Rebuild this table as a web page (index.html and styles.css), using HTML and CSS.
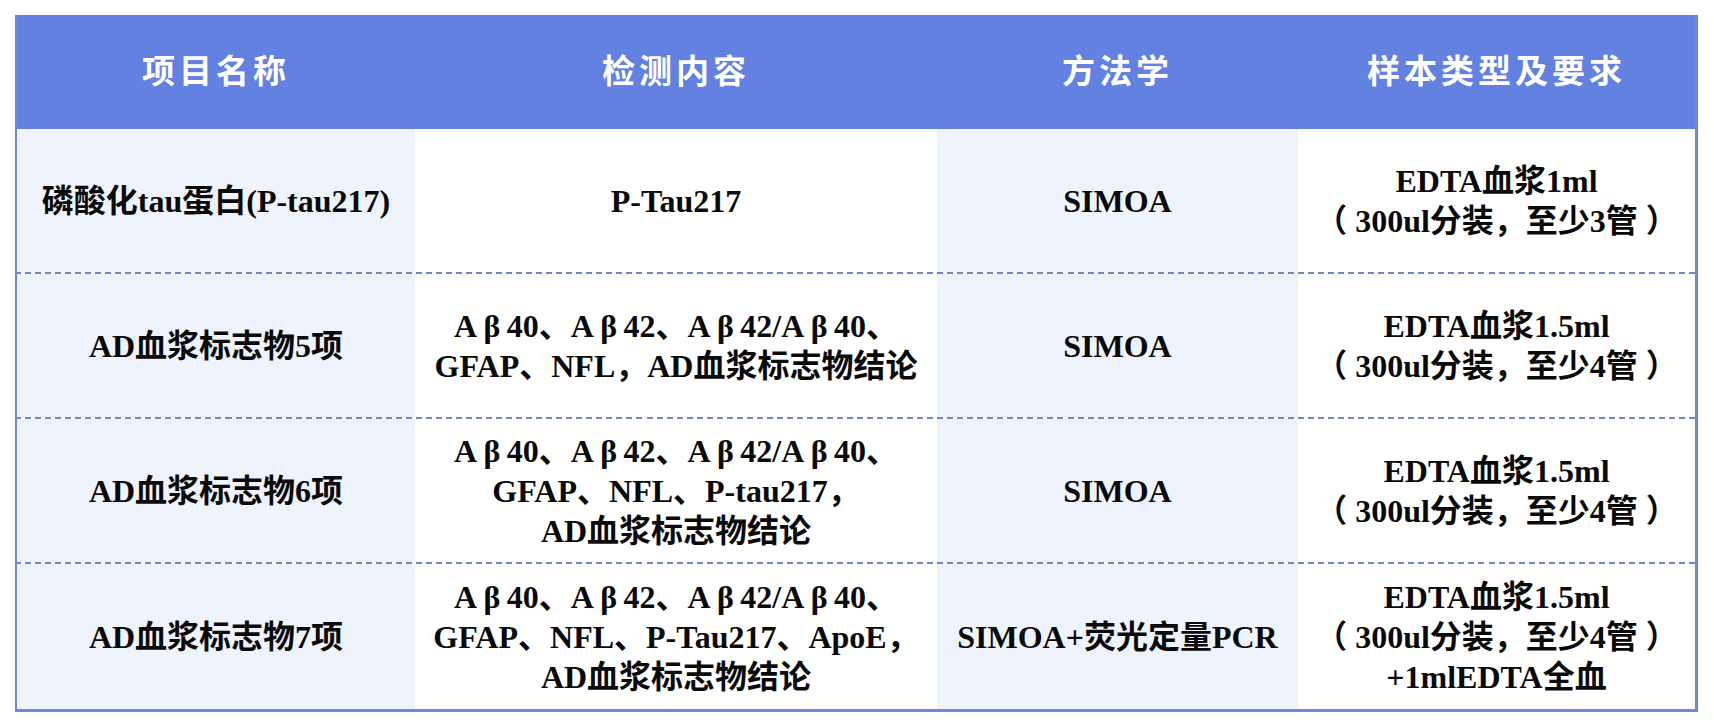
FILE: index.html
```html
<!DOCTYPE html>
<html lang="zh">
<head>
<meta charset="utf-8">
<link rel="stylesheet" href="styles.css">
</head>
<body>
<div class="table">
  <div class="row head">
    <div class="cell"><p>项目名称</p></div>
    <div class="cell"><p>检测内容</p></div>
    <div class="cell"><p>方法学</p></div>
    <div class="cell"><p>样本类型及要求</p></div>
  </div>
  <div class="row">
    <div class="cell alt"><p>磷酸化tau蛋白(P-tau217)</p></div>
    <div class="cell"><p>P-Tau217</p></div>
    <div class="cell alt"><p>SIMOA</p></div>
    <div class="cell"><p>EDTA血浆1ml<br>（ 300ul分装，至少3管 ）</p></div>
  </div>
  <div class="row">
    <div class="cell alt"><p>AD血浆标志物5项</p></div>
    <div class="cell"><p>A<span class="b">β</span>40、A<span class="b">β</span>42、A<span class="b">β</span>42/A<span class="b">β</span>40、<br>GFAP、NFL，AD血浆标志物结论</p></div>
    <div class="cell alt"><p>SIMOA</p></div>
    <div class="cell"><p>EDTA血浆1.5ml<br>（ 300ul分装，至少4管 ）</p></div>
  </div>
  <div class="row">
    <div class="cell alt"><p>AD血浆标志物6项</p></div>
    <div class="cell"><p>A<span class="b">β</span>40、A<span class="b">β</span>42、A<span class="b">β</span>42/A<span class="b">β</span>40、<br>GFAP、NFL、P-tau217，<br>AD血浆标志物结论</p></div>
    <div class="cell alt"><p>SIMOA</p></div>
    <div class="cell"><p>EDTA血浆1.5ml<br>（ 300ul分装，至少4管 ）</p></div>
  </div>
  <div class="row last">
    <div class="cell alt"><p>AD血浆标志物7项</p></div>
    <div class="cell"><p>A<span class="b">β</span>40、A<span class="b">β</span>42、A<span class="b">β</span>42/A<span class="b">β</span>40、<br>GFAP、NFL、P-Tau217、ApoE，<br>AD血浆标志物结论</p></div>
    <div class="cell alt"><p>SIMOA+荧光定量PCR</p></div>
    <div class="cell"><p>EDTA血浆1.5ml<br>（ 300ul分装，至少4管 ）<br>+1mlEDTA全血</p></div>
  </div>
</div>
</body>
</html>
```
FILE: styles.css
```css
html, body {
  margin: 0;
  padding: 0;
  background: #ffffff;
}
body {
  padding: 15px 16px 0 15px;
  font-family: "Liberation Serif", "Noto Sans CJK SC", serif;
  color: #0a0a0a;
}
.table {
  width: 1683px;
  border-left: 2px solid #6f89d9;
  border-right: 3px solid #6f89d9;
  border-bottom: 3px solid #6f89d9;
  box-sizing: border-box;
}
.row {
  display: grid;
  grid-template-columns: 398px 522px 361px 397px;
  height: 145px;
  box-sizing: border-box;
  border-bottom: 2px solid transparent;
  border-image-source: repeating-linear-gradient(to right, #7385c4 0 6px, transparent 6px 10px);
  border-image-slice: 2;
  border-image-width: 0 0 2px 0;
  border-image-repeat: stretch;
}
.row.last {
  border-bottom: none;
  border-image: none;
}
.row.head {
  height: 114px;
  background: #6281e1;
  border-bottom: none;
  border-image: none;
}
.cell {
  display: flex;
  align-items: center;
  justify-content: center;
  text-align: center;
  font-size: 32px;
  font-weight: bold;
  line-height: 40px;
  white-space: nowrap;
  min-width: 0;
}
.cell p {
  margin: 0;
}
.head .cell {
  color: #ffffff;
  font-size: 33px;
  letter-spacing: 4px;
}
.cell.alt {
  background: #eff3fc;
}
.b {
  margin: 0 0.2em;
}
```
